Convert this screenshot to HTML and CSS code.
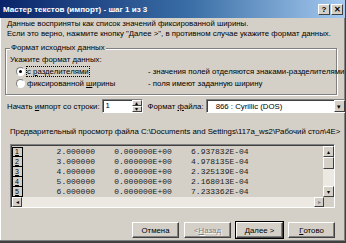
FILE: index.html
```html
<!DOCTYPE html>
<html lang="ru">
<head>
  <meta charset="UTF-8" />
  <title>Мастер текстов (импорт) - шаг 1 из 3</title>
  <link rel="stylesheet" href="styles.css">
</head>
<body>
  <div class="window">
    <div class="titlebar">
      <span class="title">Мастер текстов (импорт) - шаг 1 из 3</span>
      <div class="tb-buttons">
        <span class="tb-btn">?</span>
        <span class="tb-btn">&#x2715;</span>
      </div>
    </div>

    <div class="content">
      <p class="intro">Данные восприняты как список значений фиксированной ширины.<br>Если это верно, нажмите кнопку "Далее &gt;", в противном случае укажите формат данных.</p>

      <div class="group">
        <span class="legend">Формат исходных данных</span>
        <div class="hint">Укажите формат данных:</div>
        <div class="radio-row">
          <span class="radio checked"></span>
          <span class="radio-cell"><span class="radio-label focus">с <u>р</u>азделителями</span></span>
          <span class="desc">- значения полей отделяются знаками-разделителями</span>
        </div>
        <div class="radio-row">
          <span class="radio"></span>
          <span class="radio-cell"><span class="radio-label">фиксированной <u>ш</u>ирины</span></span>
          <span class="desc">- поля имеют заданную ширину</span>
        </div>
      </div>

      <div class="import-row">
        <span class="lbl">Начать <u>и</u>мпорт со строки:</span>
        <div class="spin">
          <span class="field">1</span>
          <div class="spin-btns">
            <span class="mini-btn">&#9652;</span>
            <span class="mini-btn">&#9662;</span>
          </div>
        </div>
        <span class="lbl fmt-label">Формат <u>ф</u>айла:</span>
        <div class="combo">
          <span class="combo-text">866 : Cyrillic (DOS)</span>
          <span class="mini-btn combo-btn">&#9662;</span>
        </div>
      </div>

      <div class="preview-label">Предварительный просмотр файла C:\Documents and Settings\117a_ws2\Рабочий стол\4E&gt;</div>

      <div class="preview">
        <div class="preview-main">
          <div class="grid">
            <div class="line"><span class="num">1</span><pre>       2.000000    0.000000E+00    6.937832E-04</pre></div>
            <div class="line"><span class="num">2</span><pre>       3.000000    0.000000E+00    4.978135E-04</pre></div>
            <div class="line"><span class="num">3</span><pre>       4.000000    0.000000E+00    2.325139E-04</pre></div>
            <div class="line"><span class="num">4</span><pre>       5.000000    0.000000E+00    2.168013E-04</pre></div>
            <div class="line"><span class="num">5</span><pre>       6.000000    0.000000E+00    7.233362E-04</pre></div>
          </div>
          <div class="vscroll">
            <span class="mini-btn">&#9652;</span>
            <span class="mini-btn thumb"></span>
            <span class="track"></span>
            <span class="mini-btn">&#9662;</span>
          </div>
        </div>
        <div class="hscroll">
          <span class="mini-btn">&#9666;</span>
          <span class="track"></span>
          <span class="mini-btn disabled">&#9656;</span>
        </div>
      </div>

      <div class="buttons">
        <span class="btn">Отмена</span>
        <span class="btn disabled">&lt; <u>Н</u>азад</span>
        <span class="btn default"><u>Д</u>алее &gt;</span>
        <span class="btn"><u>Г</u>отово</span>
      </div>
    </div>
  </div>
</body>
</html>
```

FILE: styles.css
```css
/* Classic Windows dialog */
body {
  margin: 0;
  font-family: 'Liberation Sans', Arial, sans-serif;
  font-size: 7.8px;
  color: #000;
  background: #d4d0c8;
}

.window {
  width: 346px;
  height: 243px;
  box-sizing: border-box;
  background: #d4d0c8;
  border-right: 1px solid #404040;
  border-bottom: 2px solid #404040;
  box-shadow: inset -1px -1px 0 #808080, inset 1px 0 0 #fff;
  overflow: hidden;
  white-space: nowrap;
}

.titlebar {
  height: 18px;
  display: flex;
  align-items: center;
  justify-content: space-between;
  padding: 0 2px 0 3px;
  background: linear-gradient(90deg, #0a246a 0%, #3a6ea5 55%, #a6caf0 100%);
  color: #fff;
}

.title {
  font-weight: bold;
  font-size: 8px;
}

.tb-buttons {
  display: flex;
  gap: 1px;
}

.tb-btn {
  width: 12px;
  height: 11px;
  display: flex;
  align-items: center;
  justify-content: center;
  background: #d4d0c8;
  color: #000;
  font-weight: bold;
  font-size: 8px;
  box-sizing: border-box;
  border: 1px solid;
  border-color: #fff #404040 #404040 #fff;
}

.content {
  padding: 0 0 0 7px;
}

.intro {
  margin: 0;
  padding-top: 1px;
  line-height: 10px;
}

/* Group box */
.group {
  position: relative;
  margin: 9px 8px 0 -2px;
  height: 47px;
  border: 1px solid #808080;
  box-shadow: 1px 1px 0 #fff, inset 1px 1px 0 #fff;
  padding: 6px 0 0 4px;
  box-sizing: border-box;
}

.legend {
  position: absolute;
  top: -6px;
  left: 4px;
  padding: 0 1px;
  background: #d4d0c8;
  line-height: 10px;
}

.hint {
  line-height: 10px;
}

.radio-row {
  display: flex;
  align-items: center;
  height: 12px;
  margin-left: 6px;
}

.radio {
  flex-shrink: 0;
  width: 9px;
  height: 9px;
  border-radius: 50%;
  background: #fff;
  box-sizing: border-box;
  border: 1px solid;
  border-color: #808080 #fff #fff #808080;
  display: flex;
  align-items: center;
  justify-content: center;
}

.radio.checked::after {
  content: "";
  width: 3px;
  height: 3px;
  border-radius: 50%;
  background: #000;
}

.radio-cell {
  flex-shrink: 0;
  width: 121px;
  padding-left: 2px;
}

.radio-label.focus {
  outline: 1px dotted #000;
}

/* Import row */
.import-row {
  display: flex;
  align-items: center;
  height: 14px;
  margin-top: 4px;
}

.lbl {
  flex-shrink: 0;
}

.spin {
  flex-shrink: 0;
  display: flex;
  margin-left: 2px;
  width: 41px;
  height: 14px;
  background: #fff;
  box-sizing: border-box;
  border: 1px solid;
  border-color: #808080 #fff #fff #808080;
  box-shadow: inset 1px 1px 0 #404040;
}

.field {
  flex: 1;
  padding: 1px 0 0 3px;
}

.spin-btns {
  display: flex;
  flex-direction: column;
}

.mini-btn {
  width: 10px;
  height: 6px;
  display: flex;
  align-items: center;
  justify-content: center;
  font-size: 6px;
  line-height: 1;
  background: #d4d0c8;
  box-sizing: border-box;
  border: 1px solid;
  border-color: #fff #404040 #404040 #fff;
}

.fmt-label {
  margin-left: 5px;
}

.combo {
  flex-shrink: 0;
  display: flex;
  align-items: center;
  margin-left: 2px;
  width: 140px;
  height: 14px;
  background: #fff;
  box-sizing: border-box;
  border: 1px solid;
  border-color: #808080 #fff #fff #808080;
  box-shadow: inset 1px 1px 0 #404040;
}

.combo-text {
  flex: 1;
  padding-left: 9px;
}

.combo-btn {
  height: 12px;
  width: 11px;
  font-size: 7px;
}

/* Preview */
.preview-label {
  margin: 14px 0 0 3px;
  line-height: 10px;
}

.preview {
  margin: 7px 0 0 3px;
  width: 325px;
  height: 64px;
  box-sizing: border-box;
  border: 1px solid;
  border-color: #808080 #fff #fff #808080;
  box-shadow: inset 1px 1px 0 #404040;
  display: flex;
  flex-direction: column;
  padding: 1px 0 0 1px;
}

.preview-main {
  flex: 1;
  display: flex;
}

.grid {
  flex: 1;
  padding-top: 1px;
}

.line {
  display: flex;
  align-items: center;
  height: 10px;
}

.num {
  width: 11px;
  height: 10px;
  box-sizing: border-box;
  border: 1px solid #000;
  border-top-width: 0;
  font-size: 7px;
  text-decoration: underline;
  padding-left: 2px;
  line-height: 9px;
}

.line:first-child .num {
  border-top-width: 1px;
  line-height: 8px;
}

.line pre {
  margin: 0;
  font-family: 'Liberation Mono', 'Courier New', monospace;
  font-size: 8px;
  line-height: 10px;
  color: #222;
}

.vscroll {
  width: 11px;
  display: flex;
  flex-direction: column;
  background: #ece9e2;
}

.vscroll .mini-btn {
  width: 11px;
  height: 11px;
}

.vscroll .thumb {
  height: 12px;
}

.track {
  flex: 1;
  background: #ece9e2;
}

.hscroll {
  height: 10px;
  display: flex;
  width: 312px;
  background: #ece9e2;
}

.hscroll .mini-btn {
  width: 10px;
  height: 10px;
}

.mini-btn.disabled {
  color: #808080;
}

/* Buttons */
.buttons {
  display: flex;
  justify-content: flex-end;
  gap: 5px;
  margin: 14px 10px 0 0;
}

.btn {
  width: 47px;
  height: 16px;
  display: flex;
  align-items: center;
  justify-content: center;
  box-sizing: border-box;
  border: 1px solid;
  border-color: #fff #404040 #404040 #fff;
  box-shadow: inset -1px -1px 0 #808080;
  background: #d4d0c8;
}

.btn.disabled {
  color: #808080;
  text-shadow: 1px 1px 0 #fff;
}

.btn.default {
  outline: 1px solid #000;
}
```
